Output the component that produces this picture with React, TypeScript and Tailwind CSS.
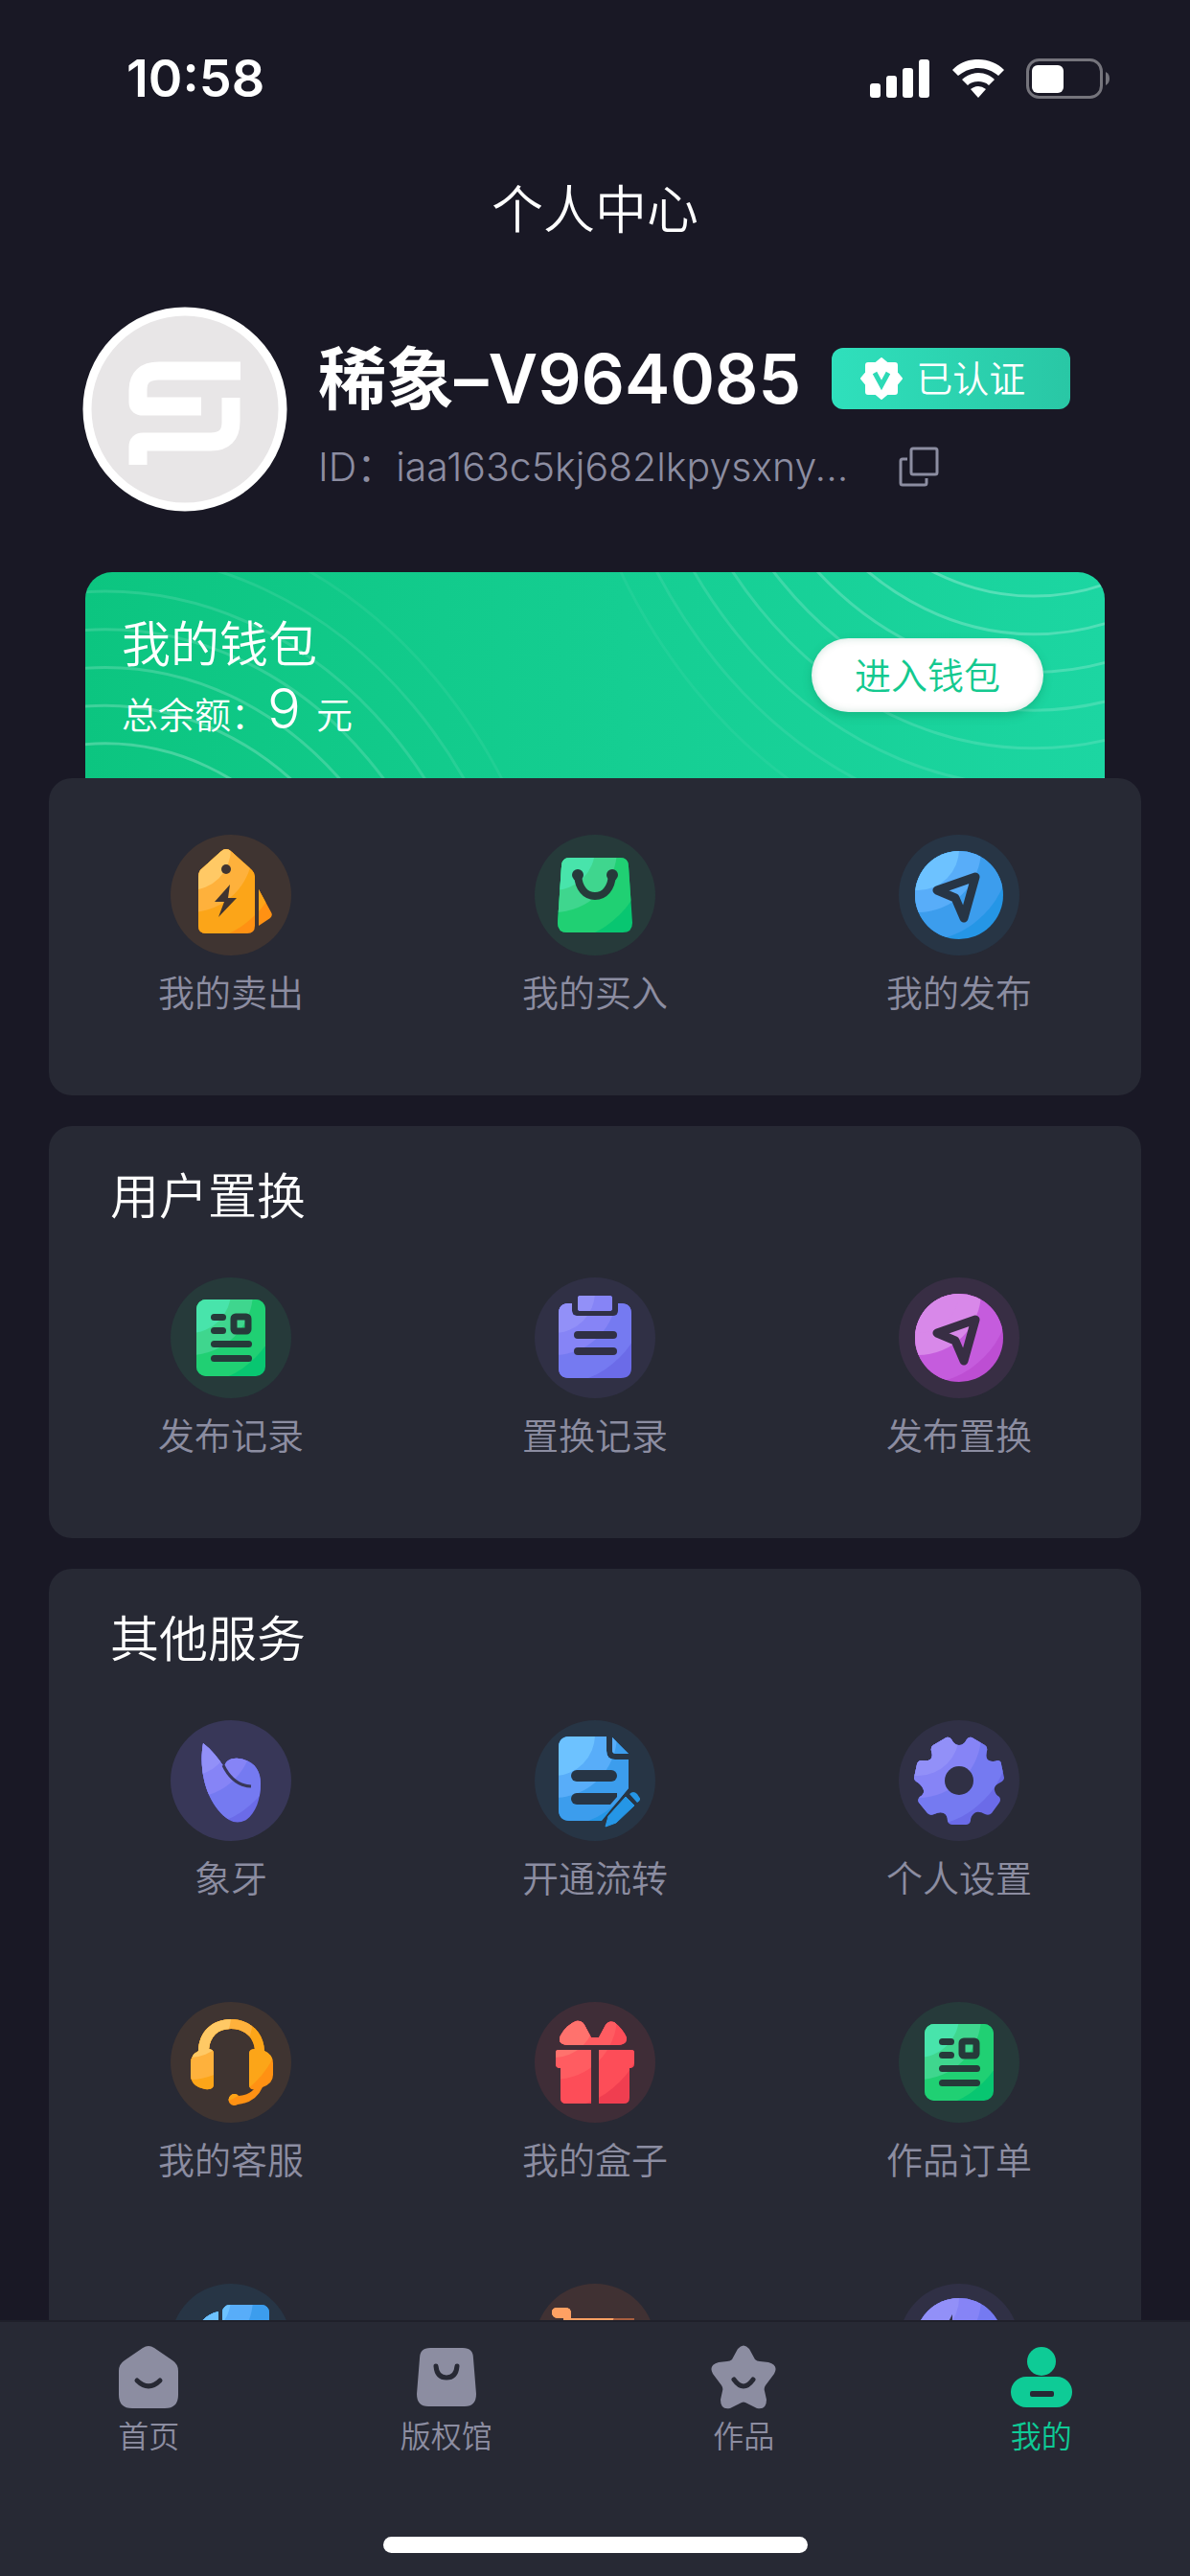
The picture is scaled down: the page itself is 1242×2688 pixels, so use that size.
import React, { useId } from "react";

type Tone = [string, string, string, string];

const GREEN: Tone = ["#48e4ab", "#3fd68e", "#20d073", "#08c671"];
const BLUE: Tone = ["#6dc2ff", "#58adf9", "#3c9ded", "#2596e6"];
const ORANGE: Tone = ["#ffc965", "#feb13c", "#fca518", "#ff9113"];
const PURPLE: Tone = ["#9290f8", "#8684f6", "#757af1", "#6b6be8"];
const PINK: Tone = ["#d888e9", "#d888e9", "#c55cdd", "#bd4ed3"];
const RED: Tone = ["#ff726d", "#ff5c61", "#fd4d58", "#f03e50"];
const CORAL: Tone = ["#ffa163", "#ffa163", "#a85f3f", "#a85f3f"];

interface BadgeProps {
  tone: Tone;
  back: string;
  shape: React.ReactNode;
  children?: React.ReactNode;
}

// round badge, the shape is filled with four bands going from light to dark
const Badge: React.FC<BadgeProps> = ({ tone, back, shape, children }) => {
  const id = useId();
  return (
    <svg viewBox="0 0 126 126" className="size-[126px]" aria-hidden="true">
      <circle cx="63" cy="63" r="63" fill={back} />
      <clipPath id={id}>{shape}</clipPath>
      <g clipPath={`url(#${id})`}>
        <rect width="126" height="126" fill={tone[3]} />
        <circle cx="20" cy="15" r="97" fill={tone[2]} />
        <circle cx="20" cy="15" r="66" fill={tone[1]} />
        <circle cx="20" cy="15" r="43" fill={tone[0]} />
      </g>
      {children}
    </svg>
  );
};

const TagIcon = () => (
  <Badge
    tone={ORANGE}
    back="#3f3431"
    shape={
      <>
        <path d="M52 18Q58 12 64 18L85 37Q88 40 88 44V95Q88 103 80 103H37Q29 103 29 95V44Q29 40 31 37Z" />
        <path d="M92 57L105 81Q107 84 104 87L92 95Z" />
      </>
    }
  >
    <circle cx="58" cy="36" r="5" fill="#3f3431" />
    <path d="M62 52L46 70H56L50 86L69 66H60Z" fill="#3f3431" />
  </Badge>
);

const BagIcon = () => (
  <Badge
    tone={GREEN}
    back="#263a3a"
    shape={
      <path d="M37 24H89Q98 24 98 33L102 92Q102 102 92 102H34Q24 102 24 92L28 33Q28 24 37 24Z" />
    }
  >
    <path
      d="M45 42C46 56 53 64 63 64S80 56 81 42"
      fill="none"
      stroke="#263a3a"
      strokeWidth="8"
    />
    <circle cx="45" cy="42" r="6" fill="#263a3a" />
    <circle cx="81" cy="42" r="6" fill="#263a3a" />
  </Badge>
);

const PlaneIcon: React.FC<{ tone: Tone; back: string }> = ({ tone, back }) => (
  <Badge tone={tone} back={back} shape={<circle cx="63" cy="63" r="46" />}>
    <path
      d="M80 44L40 58L59 66L68 87Z"
      fill="none"
      stroke={back}
      strokeWidth="9"
      strokeLinejoin="round"
    />
  </Badge>
);

const RecordIcon = () => (
  <Badge
    tone={GREEN}
    back="#263a3a"
    shape={<rect x="27" y="23" width="72" height="80" rx="10" />}
  >
    <g fill="#263a3a">
      <rect x="42" y="38" width="16" height="7" rx="3.5" />
      <rect x="42" y="52" width="16" height="7" rx="3.5" />
      <rect x="42" y="66" width="43" height="7" rx="3.5" />
      <rect x="42" y="81" width="43" height="7" rx="3.5" />
    </g>
    <rect
      x="66"
      y="41"
      width="15"
      height="15"
      rx="2"
      fill="none"
      stroke="#263a3a"
      strokeWidth="7"
    />
  </Badge>
);

const ClipboardIcon = () => (
  <Badge
    tone={PURPLE}
    back="#303045"
    shape={
      <>
        <path d="M36 27H39V35Q39 40 44 40H82Q87 40 87 35V27H90Q101 27 101 38V94Q101 105 90 105H36Q25 105 25 94V38Q25 27 36 27Z" />
        <rect x="45" y="19" width="36" height="16" rx="3" />
      </>
    }
  >
    <rect x="41" y="56" width="45" height="8" rx="4" fill="#303045" />
    <rect x="41" y="73" width="45" height="8" rx="4" fill="#303045" />
  </Badge>
);

const IvoryIcon = () => (
  <Badge
    tone={PURPLE}
    back="#383758"
    shape={
      <path d="M34 24C43 31 50 40 56 49C57 42 64 39 71 40C88 42 94 53 94 66C94 82 89 97 79 104Q70 109 61 104C42 92 28 60 34 24Z" />
    }
  >
    <path
      d="M55 47Q65 68 84 69"
      fill="none"
      stroke="#383758"
      strokeWidth="3"
    />
  </Badge>
);

const DraftIcon = () => (
  <Badge
    tone={BLUE}
    back="#273545"
    shape={
      <>
        <path d="M37 17H75V32Q75 41 84 41H98V71L70 105H37Q25 105 25 93V29Q25 17 37 17Z" />
        <path d="M81 18L98 35H85Q81 35 81 31Z" />
      </>
    }
  >
    <rect x="38" y="52" width="48" height="12" rx="6" fill="#273545" />
    <path d="M44 76H86V80L79 88H44A6 6 0 0 1 44 76Z" fill="#273545" />
    <path
      d="M74 111L77 100L95 80L104 89L85 107Z"
      fill="#2596e6"
      stroke="#2596e6"
      strokeLinejoin="round"
    />
    <path d="M99 77Q103 73 107 77L109 80Q112 83 107 86Z" fill="#2596e6" />
  </Badge>
);

const GearIcon = () => (
  <Badge
    tone={PURPLE}
    back="#303045"
    shape={
      <path d="M48 19Q52 16 55 20Q58 26 63 26T71 20Q74 16 78 19L90 26Q93 28 92 32Q90 40 94 42T103 42Q107 42 107 46L110 60Q110 63 106 65Q99 68 100 73T105 80Q107 83 105 86L97 97Q94 100 90 98Q83 94 79 97T75 105Q74 109 70 109H56Q52 109 51 105Q51 99 47 97T37 98Q33 100 30 97L21 86Q19 83 22 80Q27 77 26 73T20 65Q16 63 16 60L19 46Q20 42 24 42Q30 43 33 41T34 32Q33 28 36 26Z" />
    }
  >
    <circle cx="63" cy="63" r="15" fill="#303045" />
  </Badge>
);

const HeadsetIcon = () => (
  <Badge
    tone={ORANGE}
    back="#3f3431"
    shape={
      <>
        <path d="M29 52C29 32 43 18 63 18S98 32 98 52H88C88 38 78 28 63 28S40 38 40 52Z" />
        <path d="M36 49Q45 48 45 54V86Q45 92 36 91Q21 88 21 76V64Q21 52 36 49Z" />
        <path d="M91 49Q82 48 82 54V86Q82 92 87 91Q82 97 71 98A6 6 0 1 0 70 107Q89 105 96 89Q107 85 107 76V64Q107 52 91 49Z" />
      </>
    }
  />
);

const GiftIcon = () => (
  <Badge
    tone={RED}
    back="#3f2d37"
    shape={
      <>
        <path d="M34 45Q23 44 27 35Q33 24 43 20Q49 19 52 24L59 37H67L74 24Q77 19 83 21Q92 28 96 37Q97 44 88 45Z" />
        <path d="M25 50H59V106H33Q27 106 27 100V69Q22 69 22 65V53Q22 50 25 50Z" />
        <path d="M101 50H67V106H93Q99 106 99 100V69Q104 69 104 65V53Q104 50 101 50Z" />
      </>
    }
  />
);

const FilesIcon = () => (
  <Badge
    tone={BLUE}
    back="#273545"
    shape={
      <>
        <rect x="54" y="22" width="49" height="80" rx="8" />
        <path d="M50 29V102H34Q26 102 26 94V50Q34 32 50 29Z" />
      </>
    }
  />
);

const CartIcon = () => (
  <Badge
    tone={CORAL}
    back="#403133"
    shape={
      <>
        <path d="M24 25H32Q38 25 38 31V70H30V36H24Q18 35 18 30T24 25Z" />
        <path d="M38 36H104L96 78H38Z" />
      </>
    }
  />
);

const CompassIcon = () => (
  <Badge
    tone={PURPLE}
    back="#303045"
    shape={<circle cx="63" cy="61" r="46" />}
  >
    <path d="M56 32V62H40Z" fill="#303045" />
  </Badge>
);

interface Entry {
  label?: string;
  icon: React.ReactNode;
}

const trades: Entry[] = [
  { label: "我的卖出", icon: <TagIcon /> },
  { label: "我的买入", icon: <BagIcon /> },
  { label: "我的发布", icon: <PlaneIcon tone={BLUE} back="#273545" /> },
];

const swaps: Entry[] = [
  { label: "发布记录", icon: <RecordIcon /> },
  { label: "置换记录", icon: <ClipboardIcon /> },
  { label: "发布置换", icon: <PlaneIcon tone={PINK} back="#382e44" /> },
];

const services: Entry[] = [
  { label: "象牙", icon: <IvoryIcon /> },
  { label: "开通流转", icon: <DraftIcon /> },
  { label: "个人设置", icon: <GearIcon /> },
  { label: "我的客服", icon: <HeadsetIcon /> },
  { label: "我的盒子", icon: <GiftIcon /> },
  { label: "作品订单", icon: <RecordIcon /> },
  { icon: <FilesIcon /> },
  { icon: <CartIcon /> },
  { icon: <CompassIcon /> },
];

const EntryGrid: React.FC<{ items: Entry[] }> = ({ items }) => (
  <div className="grid grid-cols-3 gap-y-[104px]">
    {items.map((item, i) => (
      <button
        key={i}
        className="flex flex-col items-center gap-3.5 cursor-pointer text-[38px] leading-[50px] text-[#8c8da1]"
      >
        {item.icon}
        {item.label && <span>{item.label}</span>}
      </button>
    ))}
  </div>
);

const Panel: React.FC<{ title: string; items: Entry[] }> = ({
  title,
  items,
}) => (
  <section className="mt-8 rounded-3xl bg-[#272934] pt-10 pb-[82px]">
    <h2 className="mb-[50px] px-16 text-[51px] leading-[68px] text-white">
      {title}
    </h2>
    <EntryGrid items={items} />
  </section>
);

const StatusBar = () => (
  <div className="flex items-center justify-between pt-12 pr-[84px] pl-[132px]">
    <span className="text-[54px] leading-[68px] font-semibold">10:58</span>
    <svg viewBox="0 0 250 42" className="h-[42px] w-[250px]" aria-hidden="true">
      <g fill="#fff">
        <rect x="0" y="26" width="11" height="15" rx="3" />
        <rect x="17" y="18" width="11" height="23" rx="3" />
        <rect x="34" y="10" width="11" height="31" rx="3" />
        <rect x="51" y="1" width="11" height="40" rx="3" />
        <path d="M113 1C102 1 93 5 86 12L92 18C98 13 105 10 113 10S128 13 134 18L140 12C133 5 124 1 113 1Z" />
        <path d="M113 15C106 15 100 18 96 22L102 28C105 25 109 24 113 24S121 25 124 28L130 22C126 18 120 15 113 15Z" />
        <path d="M113 29Q109 29 105 32L113 41L121 32Q117 29 113 29Z" />
        <rect x="169" y="7" width="33" height="29" rx="6" />
      </g>
      <rect
        x="164.5"
        y="1.5"
        width="77"
        height="39"
        rx="12"
        fill="none"
        stroke="#75747c"
        strokeWidth="3"
      />
      <path d="M246 14Q250 16 250 21T246 28Z" fill="#75747c" />
    </svg>
  </div>
);

const Profile = () => (
  <div className="flex items-center px-[86px] pt-[62px]">
    <svg
      viewBox="0 0 214 214"
      className="size-[214px] shrink-0"
      role="img"
      aria-label="头像"
    >
      <circle cx="107" cy="107" r="102" fill="#e8e6e7" stroke="#fff" strokeWidth="9" />
      <g fill="none" stroke="#fff" strokeWidth="19">
        <path d="M165 67H80Q58 67 58 87V100Q58 104 63 104H124" />
        <path d="M155 95V120Q155 141 134 141H63Q58 141 58 146V165" />
      </g>
    </svg>
    <div className="ml-8 min-w-0 pt-4">
      <div className="flex items-center gap-8">
        <h1 className="text-[71px] leading-[80px] font-semibold whitespace-nowrap">
          稀象–V964085
        </h1>
        <span className="flex h-16 w-[249px] shrink-0 items-center gap-3 rounded-xl bg-linear-to-r from-[#2fe0bc] to-[#29c7a5] pl-7 text-[38px] leading-[50px]">
          <svg viewBox="0 0 48 48" className="size-12" aria-hidden="true">
            <path
              d="M24 3L30 8H38Q40 8 40 10V18L45 24L40 30V38Q40 40 38 40H30L24 45L18 40H10Q8 40 8 38V30L3 24L8 18V10Q8 8 10 8H18Z"
              fill="#fff"
              stroke="#fff"
              strokeWidth="2"
              strokeLinejoin="round"
            />
            <path
              d="M17 18L24 31L31 18"
              fill="none"
              stroke="#2ddab6"
              strokeWidth="5"
            />
          </svg>
          已认证
        </span>
      </div>
      <div className="mt-6 flex items-center gap-12 text-[41px] leading-[56px] text-[#8c8da1]">
        <span className="w-[558px] whitespace-nowrap">
          ID：iaa163c5kj682lkpysxny...
        </span>
        <button className="cursor-pointer" aria-label="复制">
          <svg
            viewBox="0 0 42 42"
            className="size-[42px]"
            fill="none"
            stroke="#8c8da1"
            strokeWidth="3"
            strokeLinejoin="round"
            aria-hidden="true"
          >
            <rect x="13" y="2" width="27" height="27" rx="2" />
            <path d="M9 13H4Q2 13 2 15V38Q2 40 4 40H27Q29 40 29 38V33" />
          </svg>
        </button>
      </div>
    </div>
  </div>
);

const rings = [0, 1, 2, 3, 4, 5, 6, 7];

const Wallet = () => (
  <section className="relative mx-[38px] mt-[63px] flex items-center justify-between overflow-hidden rounded-t-[28px] bg-linear-to-r from-[#0cc580] to-[#1cd6a2] pt-[42px] pr-16 pb-[34px] pl-[38px]">
    <svg
      viewBox="0 0 1064 214"
      className="absolute inset-0 h-full w-full"
      preserveAspectRatio="none"
      fill="none"
      stroke="#fff"
      strokeWidth="3"
      aria-hidden="true"
    >
      {rings.map((k) => (
        <React.Fragment key={k}>
          <ellipse
            cx="990"
            cy="-314"
            rx={277 + k * 32}
            ry={339 + k * 39.5}
            strokeOpacity={0.26 - k * 0.03}
          />
          {k < 7 && (
            <ellipse
              cx="21"
              cy="517"
              rx={288 + k * 33}
              ry={339 + k * 39.5}
              strokeOpacity={0.24 - k * 0.03}
            />
          )}
        </React.Fragment>
      ))}
    </svg>
    <div className="relative">
      <h2 className="text-[51px] leading-[68px]">我的钱包</h2>
      <p className="flex items-baseline text-[38px] leading-[64px]">
        总余额：<span className="mr-4 text-[58px]">9</span>元
      </p>
    </div>
    <button className="relative mb-2 h-[77px] w-[242px] cursor-pointer rounded-full bg-white text-[38px] leading-[50px] text-[#13c98f] shadow-[0_4px_10px_rgba(0,110,70,0.25),inset_0_0_8px_rgba(0,110,70,0.2)]">
      进入钱包
    </button>
  </section>
);

const HomeTab = () => (
  <>
    <path d="M28 3Q34-1 40 3L59 16Q65 20 65 27V52Q65 66 51 66H17Q3 66 3 52V27Q3 20 9 16Z" />
    <path d="M22 37Q34 49 46 37" className="fill-none stroke-[#272934]" strokeWidth="5" strokeLinecap="round" />
  </>
);

const GalleryTab = () => (
  <>
    <path d="M17 3H51Q62 3 62 14L65 51Q65 64 53 64H15Q3 64 3 51L6 14Q6 3 17 3Z" />
    <path d="M23 22Q24 34 34 34T45 22" className="fill-none stroke-[#272934]" strokeWidth="5" strokeLinecap="round" />
  </>
);

const WorksTab = () => (
  <>
    <path d="M28 4Q34-3 40 4L46 15Q48 17 51 17L60 18Q71 21 66 30L57 42Q55 45 56 48L58 57Q58 68 48 66L38 61Q34 58 30 61L20 66Q10 68 10 57L12 48Q13 45 11 42L2 30Q-3 21 8 18L17 17Q20 17 22 15Z" />
    <path d="M24 36Q34 50 44 36" className="fill-none stroke-[#272934]" strokeWidth="5" strokeLinecap="round" />
  </>
);

const MineTab = () => (
  <>
    <circle cx="34" cy="17" r="15" />
    <rect x="2" y="33" width="64" height="32" rx="16" />
    <rect x="22" y="48" width="25" height="6" rx="2" className="fill-[#272934]" />
  </>
);

const tabs = [
  { label: "首页", icon: <HomeTab /> },
  { label: "版权馆", icon: <GalleryTab /> },
  { label: "作品", icon: <WorksTab /> },
  { label: "我的", icon: <MineTab />, active: true },
];

const TabBar = () => (
  <nav className="shrink-0 border-t-2 border-[#1f202a] bg-[#272934] pt-6 pb-6">
    <div className="grid grid-cols-4">
      {tabs.map((tab) => (
        <a
          key={tab.label}
          href="#"
          aria-current={tab.active ? "page" : undefined}
          className={
            tab.active
              ? "flex flex-col items-center gap-1.5 fill-[#0ecb96] text-[32px] leading-[44px] text-[#0ecb96]"
              : "flex flex-col items-center gap-1.5 fill-[#8c8da1] text-[32px] leading-[44px] text-[#8c8da1]"
          }
        >
          <svg viewBox="0 0 68 68" className="size-[68px]" aria-hidden="true">
            {tab.icon}
          </svg>
          {tab.label}
        </a>
      ))}
    </div>
    <div className="mx-auto mt-[82px] h-[17px] w-[443px] rounded-full bg-white" />
  </nav>
);

const App: React.FC = () => {
  return (
    <div className="flex h-screen flex-col bg-[#191825] font-[Inter,'Noto_Sans_CJK_SC',sans-serif] font-[350] text-white">
      <main className="min-h-0 flex-1 overflow-y-auto [scrollbar-width:none]">
        <StatusBar />
        <p className="pt-[66px] text-center text-[54px] leading-[76px]">
          个人中心
        </p>
        <Profile />
        <div className="px-[51px]">
          <Wallet />
          <section className="rounded-3xl bg-[#272934] pt-[59px] pb-[82px]">
            <EntryGrid items={trades} />
          </section>
          <Panel title="用户置换" items={swaps} />
          <Panel title="其他服务" items={services} />
        </div>
      </main>
      <TabBar />
    </div>
  );
};

export default App;
